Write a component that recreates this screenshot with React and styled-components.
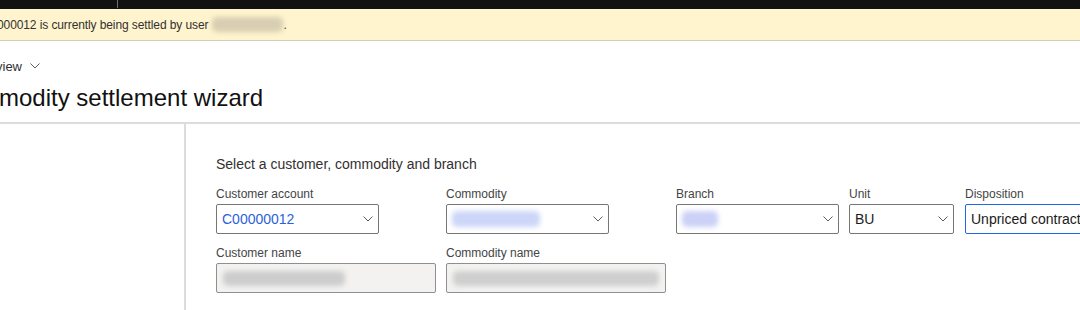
import React from 'react';
import styled, { createGlobalStyle } from 'styled-components';

const GlobalStyle = createGlobalStyle`
  html, body {
    margin: 0;
    padding: 0;
    background: #fff;
    overflow: hidden;
  }
  body {
    font-family: "Liberation Sans", Arial, sans-serif;
    color: #323130;
  }
`;

function Chevron({ size = 10 }) {
  return (
    <svg width={size} height={size / 2 + 1} viewBox="0 0 10 6" fill="none">
      <path d="M0.5 0.5 L5 5 L9.5 0.5" stroke="#605e5c" strokeWidth="1" />
    </svg>
  );
}

function App() {
  return (
    <Page>
      <GlobalStyle />
      <TopBar>
        <span className="sep" />
      </TopBar>

      <Banner>
        <span>000012 is currently being settled by user</span>
        <Blur $w={71} $h={15} $color="#d8ceb2" />
        <span>.</span>
      </Banner>

      <Header>
        <ViewSwitch>
          <span>view</span>
          <Chevron />
        </ViewSwitch>
        <Title>modity settlement wizard</Title>
      </Header>

      <Body>
        <NavPane />
        <Main>
          <Intro>Select a customer, commodity and branch</Intro>

          <FieldRow>
            <Field $w={163} $gap={67}>
              <Label>Customer account</Label>
              <Select>
                <Value $link>C00000012</Value>
                <Chevron />
              </Select>
            </Field>
            <Field $w={163} $gap={67}>
              <Label>Commodity</Label>
              <Select>
                <Blur $w={88} $h={16} $color="#cdd6f8" />
                <Chevron />
              </Select>
            </Field>
            <Field $w={163} $gap={10}>
              <Label>Branch</Label>
              <Select>
                <Blur $w={36} $h={16} $color="#cbd1f7" />
                <Chevron />
              </Select>
            </Field>
            <Field $w={105} $gap={11}>
              <Label>Unit</Label>
              <Select>
                <Value>BU</Value>
                <Chevron />
              </Select>
            </Field>
            <Field $w={140} $gap={0}>
              <Label>Disposition</Label>
              <Select $focus>
                <Value>Unpriced contract</Value>
              </Select>
            </Field>
          </FieldRow>

          <FieldRow>
            <Field $w={220} $gap={10}>
              <Label>Customer name</Label>
              <ReadOnly>
                <Blur $w={122} $h={15} $color="#cdcdcd" />
              </ReadOnly>
            </Field>
            <Field $w={220} $gap={0}>
              <Label>Commodity name</Label>
              <ReadOnly>
                <Blur $w={212} $h={15} $color="#cfcfcf" />
              </ReadOnly>
            </Field>
          </FieldRow>
        </Main>
      </Body>
    </Page>
  );
}

export default App;

const Page = styled.div`
  width: 1080px;
  height: 310px;
  overflow: hidden;
`;

const TopBar = styled.div`
  height: 9px;
  background: #111111;
  display: flex;

  > .sep {
    margin-left: 117px;
    width: 1px;
    height: 8px;
    background: #6e6e6e;
  }
`;

const Banner = styled.div`
  height: 31px;
  background: #fff4ce;
  border-bottom: 1px solid #d2cdbd;
  display: flex;
  align-items: center;
  margin-left: -3px;
  font-size: 12px;
  letter-spacing: -0.1px;
  color: #323130;

  > span:first-child {
    margin-right: 4px;
  }
`;

const Blur = styled.span`
  display: inline-block;
  width: ${(p) => p.$w}px;
  height: ${(p) => p.$h}px;
  background: ${(p) => p.$color};
  border-radius: 5px;
  filter: blur(2.5px);
`;

const Header = styled.div`
  padding-top: 16px;
  height: 65px;
  border-bottom: 2px solid #dcdcdc;
`;

const ViewSwitch = styled.div`
  display: flex;
  align-items: center;
  gap: 8px;
  margin-left: -4px;
  height: 18px;
  font-size: 13px;
  color: #323130;
`;

const Title = styled.h1`
  margin: 7px 0 0 -1px;
  font-size: 24px;
  line-height: 32px;
  font-weight: 400;
  color: #111;
`;

const Body = styled.div`
  display: flex;
  height: 200px;
`;

const NavPane = styled.div`
  width: 184px;
  flex-shrink: 0;
  border-right: 2px solid #dcdcdc;
`;

const Main = styled.div`
  padding: 31px 0 0 30px;
  display: flex;
  flex-direction: column;
`;

const Intro = styled.div`
  font-size: 14px;
  line-height: 18px;
  color: #323130;
  margin-bottom: 13px;
`;

const FieldRow = styled.div`
  display: flex;
  margin-bottom: 11px;
`;

const Field = styled.div`
  width: ${(p) => p.$w}px;
  margin-right: ${(p) => p.$gap}px;
  flex-shrink: 0;
  display: flex;
  flex-direction: column;
`;

const Label = styled.label`
  font-size: 12px;
  line-height: 16px;
  color: #444;
  margin-bottom: 2px;
`;

const Select = styled.div`
  box-sizing: border-box;
  height: 30px;
  border: 1px solid ${(p) => (p.$focus ? '#2266e3' : '#767676')};
  border-radius: 2px;
  padding: 0 5px 0 5px;
  display: flex;
  align-items: center;
  justify-content: space-between;
  background: #fff;
  width: ${(p) => (p.$focus ? '200px' : 'auto')};
`;

const Value = styled.span`
  font-size: 14px;
  color: ${(p) => (p.$link ? '#2d5fdc' : '#1b1b1b')};
  white-space: nowrap;
`;

const ReadOnly = styled.div`
  box-sizing: border-box;
  height: 30px;
  border: 1px solid #8f8f8f;
  border-radius: 2px;
  background: #f3f2f1;
  padding: 0 6px;
  display: flex;
  align-items: center;
  overflow: hidden;
`;
